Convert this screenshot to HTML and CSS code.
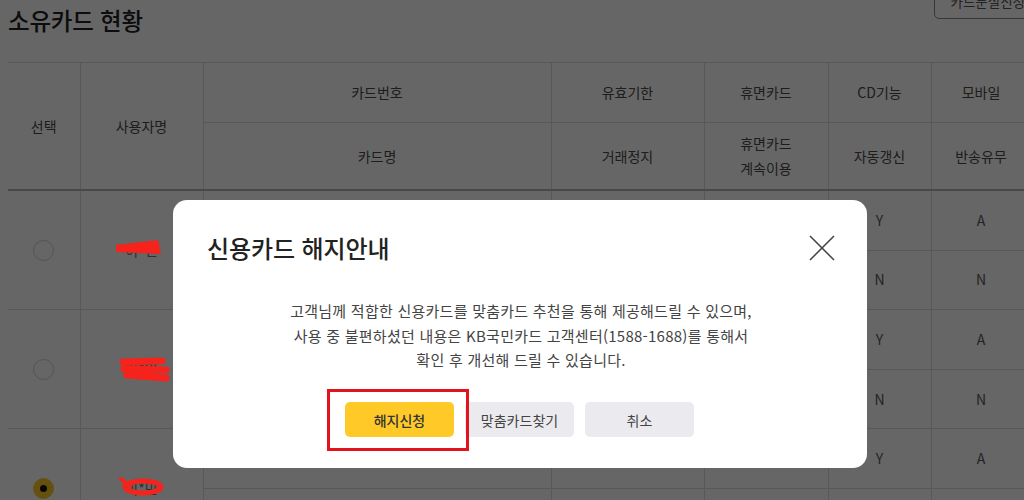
FILE: index.html
```html
<!DOCTYPE html>
<html lang="ko">
<head>
<meta charset="utf-8">
<title>소유카드 현황</title>
<link rel="stylesheet" href="styles.css">
</head>
<body>
<div class="page">
  <header class="head">
    <h1 class="title">소유카드 현황</h1>
    <button class="lost-btn" type="button">카드분실신청</button>
  </header>
  <table class="cards">
    <colgroup>
      <col class="w-sel"><col class="w-name"><col class="w-no"><col class="w-exp"><col class="w-dorm"><col class="w-cd"><col class="w-mob">
    </colgroup>
    <thead>
      <tr class="hr1">
        <th rowspan="2" class="first">선택</th>
        <th rowspan="2">사용자명</th>
        <th>카드번호</th>
        <th>유효기한</th>
        <th>휴면카드</th>
        <th>CD기능</th>
        <th>모바일</th>
      </tr>
      <tr class="hr2">
        <th>카드명</th>
        <th>거래정지</th>
        <th>휴면카드<br>계속이용</th>
        <th>자동갱신</th>
        <th>반송유무</th>
      </tr>
    </thead>
    <tbody>
      <tr>
        <td rowspan="2" class="first"><span class="radio"></span></td>
        <td rowspan="2" class="name">이*민</td>
        <td></td><td></td><td></td><td>Y</td><td>A</td>
      </tr>
      <tr>
        <td></td><td></td><td></td><td>N</td><td>N</td>
      </tr>
      <tr>
        <td rowspan="2" class="first"><span class="radio"></span></td>
        <td rowspan="2" class="name">이*민</td>
        <td></td><td></td><td></td><td>Y</td><td>A</td>
      </tr>
      <tr>
        <td></td><td></td><td></td><td>N</td><td>N</td>
      </tr>
      <tr>
        <td rowspan="2" class="first"><span class="radio on"></span></td>
        <td rowspan="2" class="name">이*민</td>
        <td></td><td></td><td></td><td>Y</td><td>A</td>
      </tr>
      <tr>
        <td></td><td></td><td></td><td></td><td></td>
      </tr>
    </tbody>
  </table>
</div>

<div class="overlay">
  <div class="modal" role="dialog" aria-labelledby="mtitle">
    <div class="modal-head">
      <h2 id="mtitle" class="modal-title">신용카드 해지안내</h2>
      <button class="close" type="button" aria-label="닫기">
        <svg width="26" height="26" viewBox="0 0 26 26"><path d="M1 1 L25 25 M25 1 L1 25" stroke="#444" stroke-width="1.5" fill="none"/></svg>
      </button>
    </div>
    <p class="modal-text">고객님께 적합한 신용카드를 맞춤카드 추천을 통해 제공해드릴 수 있으며,<br>사용 중 불편하셨던 내용은 KB국민카드 고객센터(1588-1688)를 통해서<br>확인 후 개선해 드릴 수 있습니다.</p>
    <div class="actions">
      <button class="btn btn-primary" type="button">해지신청</button>
      <button class="btn" type="button">맞춤카드찾기</button>
      <button class="btn" type="button">취소</button>
    </div>
  </div>
</div>

<svg class="marks" width="1024" height="500" viewBox="0 0 1024 500">
  <polygon points="116,245 158,240 161,254 116,252" fill="#f5231b"/>
  <path d="M123 362 L162 361 M124 369 L166 370 M127 375 L166 378" stroke="#f5231b" stroke-width="7" stroke-linecap="round" fill="none"/>
  <ellipse cx="143" cy="487" rx="18" ry="6" stroke="#f5231b" stroke-width="5" fill="none"/>
  <path d="M121 479 L130 486" stroke="#f5231b" stroke-width="4" stroke-linecap="round"/>
  <rect x="328.5" y="390.5" width="139" height="59" stroke="#e3121c" stroke-width="3" fill="none"/>
</svg>
</body>
</html>
```

FILE: styles.css
```css
html, body {
  margin: 0;
  padding: 0;
  background: #fff;
  overflow: hidden;
  width: 1024px;
  height: 500px;
}

body {
  font-family: "Noto Sans CJK KR", "Noto Sans", sans-serif;
  color: #333;
}

.page {
  width: 1041px;
  box-sizing: border-box;
  padding-left: 8px;
}

.head {
  display: flex;
  justify-content: space-between;
  align-items: flex-start;
  height: 62px;
}

.title {
  margin: 0;
  padding-top: 4px;
  font-size: 23.5px;
  line-height: 32px;
  font-weight: 500;
  color: #222;
  letter-spacing: -0.2px;
}

.lost-btn {
  margin-top: -17px;
  height: 36px;
  padding: 0 15px;
  border: 1px solid #8a8a8a;
  border-radius: 5px;
  background: #fff;
  font-family: inherit;
  font-size: 13.5px;
  color: #555;
}

.cards {
  border-collapse: collapse;
  table-layout: fixed;
  width: 1023px;
  border-top: 1px solid #c4c4c4;
}

.w-sel { width: 72px; }
.w-name { width: 123px; }
.w-no { width: 348px; }
.w-exp { width: 153px; }
.w-dorm { width: 124px; }
.w-cd { width: 103px; }
.w-mob { width: 100px; }

.cards th,
.cards td {
  border: 1px solid #dcdcdc;
  padding: 0;
  text-align: center;
  vertical-align: middle;
  font-size: 14px;
  font-weight: 400;
  color: #4a4a4a;
  line-height: 25px;
}

.cards .first { border-left: none; }

.cards .hr1 th { height: 59px; }
.cards .hr2 th { height: 66px; border-bottom: 2px solid #b5b5b5; }
.cards thead th[rowspan] { border-bottom: 2px solid #b5b5b5; }

.cards tbody td { height: 58.6px; color: #5a5a5a; }

.cards .name { color: #777; }

.radio {
  display: block;
  margin: 0 auto;
  width: 19px;
  height: 19px;
  border: 1px solid #d2d2d2;
  border-radius: 50%;
  position: relative;
  background: #fff;
}

.radio.on {
  background: #ffc928;
  border-color: #ffc928;
}

.radio.on::after {
  content: "";
  position: absolute;
  left: 6px;
  top: 6px;
  width: 7px;
  height: 7px;
  border-radius: 50%;
  background: #111;
}

.overlay {
  position: fixed;
  inset: 0;
  background: rgba(0, 0, 0, 0.6);
  padding: 200px 0 0 173px;
  box-sizing: border-box;
}

.modal {
  width: 694px;
  box-sizing: border-box;
  background: #fff;
  border-radius: 14px;
  padding: 30px 32px 31px 34px;
}

.modal-head {
  display: flex;
  justify-content: space-between;
  align-items: center;
  height: 36px;
}

.modal-title {
  margin: 0;
  font-size: 24px;
  line-height: 36px;
  font-weight: 500;
  color: #222;
  letter-spacing: -0.1px;
}

.close {
  border: none;
  background: none;
  padding: 0;
  width: 26px;
  height: 26px;
  display: flex;
}

.modal-text {
  margin: 33px 0 0;
  text-align: center;
  font-size: 15px;
  letter-spacing: 0.25px;
  line-height: 24.5px;
  color: #444;
}

.actions {
  margin: 29.5px 0 0 -3px;
  display: flex;
  justify-content: center;
  gap: 11px;
}

.btn {
  width: 109px;
  height: 35px;
  border: none;
  border-radius: 5px;
  background: #eaeaef;
  font-family: inherit;
  font-size: 14px;
  color: #444;
}

.btn-primary {
  background: #ffc928;
  color: #333;
  font-weight: 500;
}

.marks {
  position: absolute;
  left: 0;
  top: 0;
  pointer-events: none;
}
```
